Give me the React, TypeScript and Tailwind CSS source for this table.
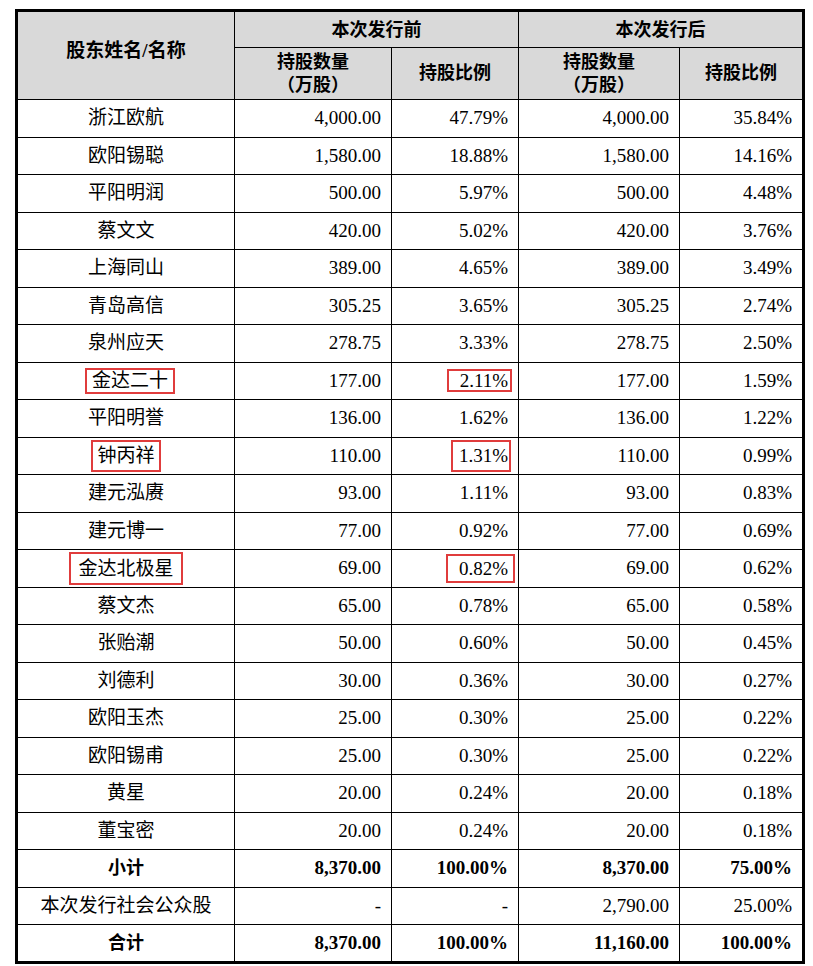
type Row = {
  name: string
  q1: string
  p1: string
  q2: string
  p2: string
  bold?: boolean
  nameBox?: string
  pctBox?: string
}

const rows: Row[] = [
  { name: "浙江欧航", q1: "4,000.00", p1: "47.79%", q2: "4,000.00", p2: "35.84%" },
  { name: "欧阳锡聪", q1: "1,580.00", p1: "18.88%", q2: "1,580.00", p2: "14.16%" },
  { name: "平阳明润", q1: "500.00", p1: "5.97%", q2: "500.00", p2: "4.48%" },
  { name: "蔡文文", q1: "420.00", p1: "5.02%", q2: "420.00", p2: "3.76%" },
  { name: "上海同山", q1: "389.00", p1: "4.65%", q2: "389.00", p2: "3.49%" },
  { name: "青岛高信", q1: "305.25", p1: "3.65%", q2: "305.25", p2: "2.74%" },
  { name: "泉州应天", q1: "278.75", p1: "3.33%", q2: "278.75", p2: "2.50%" },
  {
    name: "金达二十",
    q1: "177.00",
    p1: "2.11%",
    q2: "177.00",
    p2: "1.59%",
    nameBox: "px-[5px] py-[1px] leading-[20px] translate-x-[4px]",
    pctBox: "pl-[11px] pr-[2px] -mr-[4px] leading-[19px]",
  },
  { name: "平阳明誉", q1: "136.00", p1: "1.62%", q2: "136.00", p2: "1.22%" },
  {
    name: "钟丙祥",
    q1: "110.00",
    p1: "1.31%",
    q2: "110.00",
    p2: "0.99%",
    nameBox: "px-[4px] py-[4px] leading-[20px]",
    pctBox: "pl-[6px] pr-[1px] -mr-[3px] py-[4px] leading-[20px]",
  },
  { name: "建元泓赓", q1: "93.00", p1: "1.11%", q2: "93.00", p2: "0.83%" },
  { name: "建元博一", q1: "77.00", p1: "0.92%", q2: "77.00", p2: "0.69%" },
  {
    name: "金达北极星",
    q1: "69.00",
    p1: "0.82%",
    q2: "69.00",
    p2: "0.62%",
    nameBox: "px-[7px] py-[4px] leading-[21px]",
    pctBox: "pl-[11px] pr-[5px] -mr-[7px] py-[2px] leading-[21px]",
  },
  { name: "蔡文杰", q1: "65.00", p1: "0.78%", q2: "65.00", p2: "0.58%" },
  { name: "张贻潮", q1: "50.00", p1: "0.60%", q2: "50.00", p2: "0.45%" },
  { name: "刘德利", q1: "30.00", p1: "0.36%", q2: "30.00", p2: "0.27%" },
  { name: "欧阳玉杰", q1: "25.00", p1: "0.30%", q2: "25.00", p2: "0.22%" },
  { name: "欧阳锡甫", q1: "25.00", p1: "0.30%", q2: "25.00", p2: "0.22%" },
  { name: "黄星", q1: "20.00", p1: "0.24%", q2: "20.00", p2: "0.18%" },
  { name: "董宝密", q1: "20.00", p1: "0.24%", q2: "20.00", p2: "0.18%" },
  { name: "小计", q1: "8,370.00", p1: "100.00%", q2: "8,370.00", p2: "75.00%", bold: true },
  { name: "本次发行社会公众股", q1: "-", p1: "-", q2: "2,790.00", p2: "25.00%" },
  { name: "合计", q1: "8,370.00", p1: "100.00%", q2: "11,160.00", p2: "100.00%", bold: true },
]

const serif = "font-['Liberation_Serif','Noto_Sans_CJK_SC',serif]"
const head = "font-['Liberation_Serif','Noto_Sans_CJK_SC',sans-serif] font-bold text-[18px] leading-[23px] text-black"

export default function App() {
  return (
    <div className="min-h-screen bg-white pl-[15px] pt-[9px]">
      <table className="table-fixed border-collapse border-[3px] border-black w-[787px]">
        <colgroup>
          <col className="w-[218px]" />
          <col className="w-[157px]" />
          <col className="w-[127px]" />
          <col className="w-[161px]" />
          <col className="w-[124px]" />
        </colgroup>
        <thead>
          <tr className="h-[37px]">
            <th rowSpan={2} className={`border border-black bg-[#d9d9d9] text-center align-middle pb-[10px] text-[19px] ${head}`}>
              股东姓名/名称
            </th>
            <th colSpan={2} className={`border border-black bg-[#d9d9d9] text-center pt-[2px] ${head}`}>
              本次发行前
            </th>
            <th colSpan={2} className={`border border-black bg-[#d9d9d9] text-center pt-[2px] ${head}`}>
              本次发行后
            </th>
          </tr>
          <tr className="h-[52px]">
            <th className={`border border-black bg-[#d9d9d9] text-center ${head}`}>
              持股数量
              <br />
              （万股）
            </th>
            <th className={`border border-black bg-[#d9d9d9] text-center ${head}`}>持股比例</th>
            <th className={`border border-black bg-[#d9d9d9] text-center ${head}`}>
              持股数量
              <br />
              （万股）
            </th>
            <th className={`border border-black bg-[#d9d9d9] text-center ${head}`}>持股比例</th>
          </tr>
        </thead>
        <tbody className={`${serif} text-[19px] leading-[22px] text-black`}>
          {rows.map((r) => (
            <tr key={r.name} className={`h-[37.5px] ${r.bold ? "font-bold" : ""}`}>
              <td className={`border border-black text-center ${r.bold ? "text-[18px]" : ""}`}>
                {r.nameBox ? (
                  <span className={`inline-block border-2 border-[#e03c3c] ${r.nameBox}`}>{r.name}</span>
                ) : (
                  r.name
                )}
              </td>
              <td className="border border-black text-right pr-[10px]">{r.q1}</td>
              <td className="border border-black text-right pr-[10px]">
                {r.pctBox ? (
                  <span className={`inline-block border-2 border-[#e03c3c] ${r.pctBox}`}>{r.p1}</span>
                ) : (
                  r.p1
                )}
              </td>
              <td className="border border-black text-right pr-[10px]">{r.q2}</td>
              <td className="border border-black text-right pr-[10px]">{r.p2}</td>
            </tr>
          ))}
        </tbody>
      </table>
    </div>
  )
}
